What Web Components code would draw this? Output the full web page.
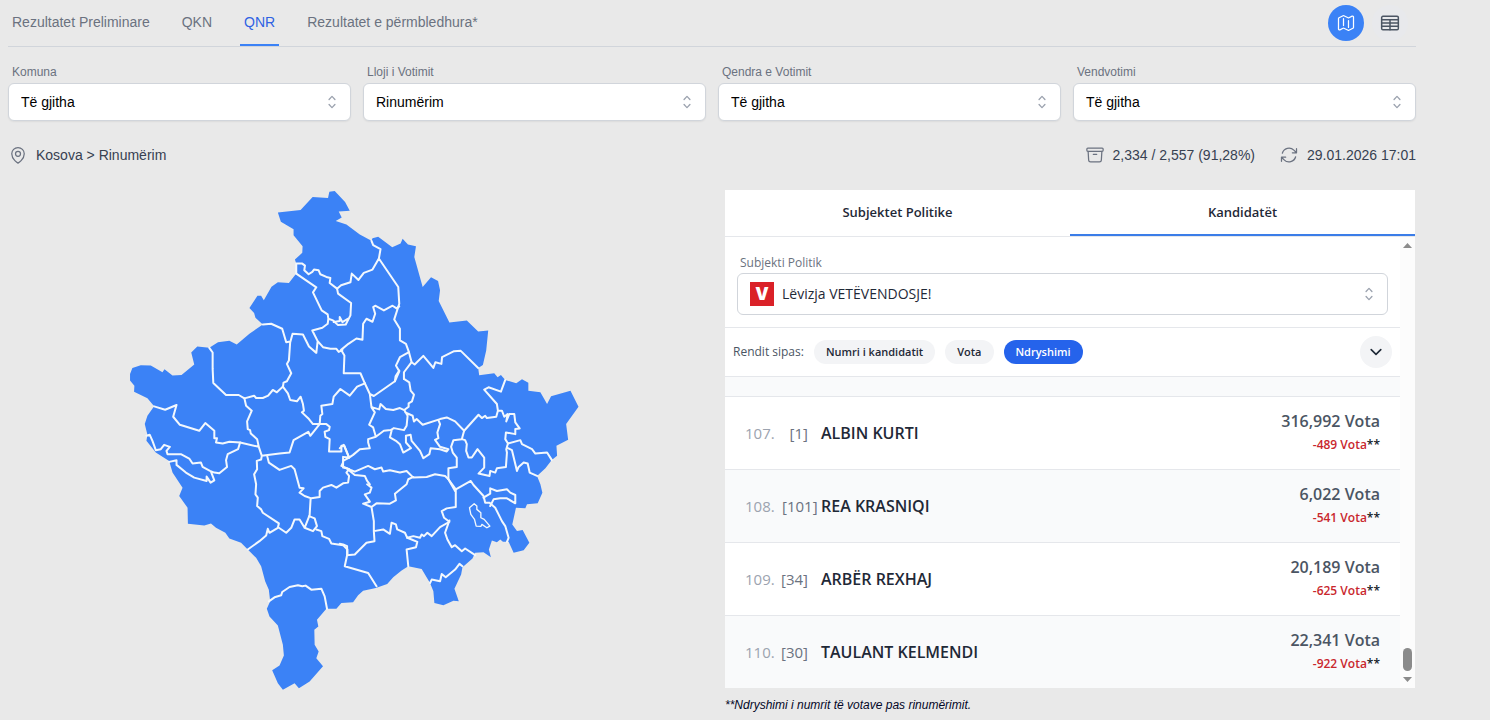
<!DOCTYPE html>
<html lang="sq">
<head>
<meta charset="utf-8">
<meta name="viewport" content="width=device-width, initial-scale=1">
<title>Rezultatet – QNR</title>
<style>
  body { margin: 0; background: #e9e9e9; font-family: "Liberation Sans", Arial, sans-serif; font-size: 14px; line-height: 20px; color: #374151; }
</style>
</head>
<body>
<results-page></results-page>

<template id="t-page">
  <style>
    :host { display: block; padding: 0 74px 0 8px; }
    .filters { display: grid; grid-template-columns: repeat(4, 1fr); gap: 12px; padding-top: 17px; }
    .info { display: flex; align-items: center; gap: 24px; padding: 24px 0 25px; }
    .info :first-child { margin-right: auto; }
    .content { display: grid; grid-template-columns: 1fr 1fr; gap: 24px; align-items: start; }
    aside { padding-left: 1px; padding-right: 1px; }
    .note { margin: 0; padding-top: 7px; font-size: 12px; font-style: italic; color: #030727; }
  </style>
  <results-nav></results-nav>
  <main>
    <div class="filters">
      <filter-select label="Komuna" value="Të gjitha"></filter-select>
      <filter-select label="Lloji i Votimit" value="Rinumërim"></filter-select>
      <filter-select label="Qendra e Votimit" value="Të gjitha"></filter-select>
      <filter-select label="Vendvotimi" value="Të gjitha"></filter-select>
    </div>
    <div class="info">
      <info-item icon="pin">Kosova &gt; Rinumërim</info-item>
      <info-item icon="archive">2,334 / 2,557 (91,28%)</info-item>
      <info-item icon="refresh">29.01.2026 17:01</info-item>
    </div>
    <div class="content">
      <kosovo-map></kosovo-map>
      <aside>
        <candidate-panel></candidate-panel>
        <p class="note">**Ndryshimi i numrit të votave pas rinumërimit.</p>
      </aside>
    </div>
  </main>
</template>

<template id="t-nav">
  <style>
    :host { display: flex; align-items: stretch; justify-content: space-between; height: 46px; border-bottom: 1px solid #d1d5db; }
    nav { display: flex; gap: 24px; }
    a { display: flex; align-items: center; padding: 0 4px; border-bottom: 2px solid transparent; color: #6b7280; text-decoration: none; }
    a[aria-current] { color: #2f62e3; border-color: #3b82f6; }
    .views { display: flex; align-items: center; gap: 8px; padding-right: 8px; }
    button { display: grid; place-items: center; width: 36px; height: 36px; padding: 0; border: 0; border-radius: 50%; background: #e8e9ec; color: #4b5563; }
    button[aria-pressed="true"] { background: #3b82f6; color: #fff; }
    svg { width: 20px; height: 20px; fill: none; stroke: currentColor; stroke-width: 1.5; stroke-linecap: round; stroke-linejoin: round; }
  </style>
  <nav>
    <a href="#preliminare">Rezultatet Preliminare</a>
    <a href="#qkn">QKN</a>
    <a href="#qnr" aria-current="page">QNR</a>
    <a href="#permbledhura">Rezultatet e përmbledhura*</a>
  </nav>
  <div class="views">
    <button type="button" aria-pressed="true" aria-label="Harta"><svg viewBox="0 0 24 24"><path d="M9 6.75V15m6-6v8.25m.503 3.498 4.875-2.437c.381-.19.622-.58.622-1.006V4.82c0-.836-.88-1.38-1.628-1.006l-3.869 1.934c-.317.159-.69.159-1.006 0L9.503 3.252a1.125 1.125 0 0 0-1.006 0L3.622 5.689C3.24 5.88 3 6.27 3 6.695V19.18c0 .836.88 1.38 1.628 1.006l3.869-1.934c.317-.159.69-.159 1.006 0l4.994 2.497c.317.158.69.158 1.006 0Z"/></svg></button>
    <button type="button" aria-pressed="false" aria-label="Tabela"><svg viewBox="0 0 24 24"><rect x="2" y="4" width="20" height="16" rx="1.5" stroke-width="1.8"/><path stroke-width="1.8" d="M2 8.2h20M2 12h20M2 16h20M12 8.2V20"/></svg></button>
  </div>
</template>

<template id="t-select">
  <style>
    :host { display: block; }
    label { display: block; padding: 0 4px; font-size: 12px; line-height: 16px; margin-bottom: 3px; color: #6b7280; }
    .box { display: grid; align-items: center; box-sizing: border-box; height: 38px; border: 1px solid #d1d5db; border-radius: 6px; background: #fff; box-shadow: 0 1px 2px rgba(0,0,0,.06); }
    select, svg { grid-area: 1 / 1; }
    select { appearance: none; width: 100%; height: 100%; padding: 0 40px 0 12px; border: 0; border-radius: 6px; background: transparent; font: inherit; color: #000; }
    svg { justify-self: end; margin-right: 9px; width: 18px; height: 18px; fill: #9ca3af; pointer-events: none; }
  </style>
  <label for="s"></label>
  <div class="box">
    <select id="s"><option></option></select>
    <svg viewBox="0 0 20 20"><path fill-rule="evenodd" d="M10 3a.75.75 0 01.55.24l3.25 3.5a.75.75 0 11-1.1 1.02L10 4.852 7.3 7.76a.75.75 0 01-1.1-1.02l3.25-3.5A.75.75 0 0110 3zm-3.76 9.2a.75.75 0 011.06.04l2.7 2.908 2.7-2.908a.75.75 0 111.1 1.02l-3.25 3.5a.75.75 0 01-1.1 0l-3.25-3.5a.75.75 0 01.04-1.06z"/></svg>
  </div>
</template>

<template id="t-info">
  <style>
    :host { display: flex; align-items: center; gap: 8px; }
    svg { width: 20px; height: 20px; fill: none; stroke: #6b7280; stroke-width: 1.5; stroke-linecap: round; stroke-linejoin: round; }
  </style>
  <svg viewBox="0 0 24 24"><path/></svg>
  <span><slot></slot></span>
</template>

<template id="t-map">
  <style>
    :host { display: flex; justify-content: center; }
    svg { width: 68%; aspect-ratio: 1407 / 1500; }
    .land { fill: #3b82f6; }
    .borders { fill: none; stroke: #f3f8fd; stroke-width: 6; stroke-linejoin: round; stroke-linecap: round; }
  </style>
  <svg viewBox="0 30 1407 1500" role="img" aria-label="Harta e Kosovës">
    <path class="land" d="M475,97 543,90 579,51 625,54 629,35 645,33 676,66 690,92 657,94 666,112 648,123 680,133 720,163 755,182 758,174 775,170 817,201 842,190 848,176 864,193 888,198 883,230 908,320 933,291 954,302 960,330 956,362 988,426 1040,420 1074,453 1104,450 1098,510 1088,553 1074,562 1077,584 1122,578 1132,590 1142,583 1155,598 1188,608 1205,596 1224,606 1224,630 1260,635 1280,670 1292,647 1350,630 1374,678 1337,730 1343,777 1308,795 1310,825 1294,837 1275,862 1250,885 1260,910 1266,935 1252,967 1220,970 1215,982 1187,980 1176,1030 1190,1050 1207,1047 1227,1085 1210,1107 1180,1115 1165,1082 1148,1082 1140,1075 1130,1083 1115,1078 1106,1105 1112,1128 1090,1113 1065,1115 1057,1132 1027,1158 1023,1180 1003,1222 1016,1260 1000,1258 970,1272 943,1265 940,1230 930,1205 905,1163 865,1155 845,1168 820,1188 802,1208 768,1220 730,1228 715,1242 700,1263 665,1265 650,1282 620,1282 592,1315 596,1335 584,1345 585,1390 597,1410 590,1430 610,1454 570,1500 538,1520 525,1505 490,1524 475,1505 458,1466 480,1452 493,1422 490,1390 475,1332 450,1305 442,1282 452,1260 448,1225 437,1200 425,1155 410,1130 385,1105 365,1085 330,1072 318,1055 290,1040 275,1027 255,1033 206,1028 205,980 180,945 190,920 160,875 150,840 110,815 82,780 85,762 77,730 85,705 105,677 85,653 45,633 46,615 33,600 33,580 40,562 65,554 95,555 130,575 136,566 160,585 187,583 225,552 216,516 234,498 270,502 296,485 330,481 352,492 390,460 430,432 408,412 404,398 390,383 414,346 425,346 433,360 456,319 475,306 508,308 530,280 530,250 526,238 548,218 549,198 522,165 522,147 484,125Z"/>
    <g class="borders">
      <path d="M530,280V250L548,250 556,256 554,270 567,282 578,275 583,268 597,270 602,282 620,290 632,293 630,308 652,325 664,315 692,306 696,280 716,299 732,278 758,268 777,235 782,207 760,195 755,182M777,235 835,320 838,370 823,417 840,445 840,480 858,490 867,515 875,545 884,552 910,526 940,562 946,545 964,550 966,530 1002,512 1022,511 1074,562"/>
      <path d="M530,280 590,321 580,336 606,390 624,402 626,415 624,430 608,442 578,450 594,482 590,517 568,498 550,462 519,460 512,485M594,482 610,500 632,505 650,505 657,514 668,508M626,415 640,420 655,434 678,432 692,405 694,368 655,340 652,325M642,425 660,422 660,410 668,425 684,415 M430,432 455,430 488,445 500,485 512,483 508,540 502,550 515,578 502,602 492,606 490,620M270,502 280,516 280,565 282,607 320,643 358,643 375,653 404,645 410,652 430,652 446,645 460,628 472,635 490,618"/>
      <g transform="translate(660)">
        <path d="M178,378 170,384 158,376 132,390 106,376 100,380 106,400 98,424 80,415 70,430 68,478 50,474 26,490 4,508 14,525 12,578 62,578 75,608M207,515 180,530 168,555 178,572 165,602M215,545 192,575 192,595"/>
      </g>
      <g transform="translate(0 540)">
        <path d="M375,113 380,135 397,150 383,182 385,205 392,208 394,218 413,235 418,258 362,245 330,243 310,248 290,245 293,232 285,232 285,210 258,187 240,210 182,192 162,168 172,133 138,147 105,137M418,258 427,285 425,296 412,300 413,325 404,340 410,370 408,400 415,410 413,435 425,445 430,455 478,487 475,500 450,515 445,503 440,523 420,540 385,565M427,285 480,278 510,275 522,238 566,213 572,225 600,190 580,190 568,175 547,155 553,150 550,130 543,108 532,122 512,118 505,98 490,78M600,190 602,165 608,160 605,135 638,130 642,108 662,85 690,105 712,78 735,68"/>
        <path d="M600,190 620,190 630,198 628,208 615,213 617,228 630,235 628,272 665,272 665,255 674,255 688,290 670,288 670,305 665,315 688,325 680,335 688,345 685,365 670,367 650,380 635,372 610,380 600,390 600,408 575,412 555,405 540,395 552,382 540,380 525,325 515,315 480,327 448,305 443,285M573,412 570,462 555,500 540,475 525,475 515,500 500,515 478,500M568,465 585,472 592,495 580,510 555,500M362,245 356,265 325,280 320,298 323,318 300,337 285,335 272,330 250,318 245,305 220,308 210,293 185,280 145,280 142,270 152,258 135,252 125,265 110,268 100,240 92,222 82,225M150,303 172,298 172,312 200,335 225,350 262,360 262,347 274,365 285,358 275,332"/>
      </g>
      <g transform="translate(660 540)">
        <path d="M75,68 90,100 102,106 165,62 167,47 178,30M192,55 208,65 212,90 222,102 216,122 206,128 206,138 193,148 180,142 160,148 138,145 122,130 118,146 98,140M90,100 95,140 105,155 88,192 100,200 108,228M193,148 203,165 200,195 192,208 162,202 152,208 132,210 108,228 85,235 85,245 90,262 60,265 40,282 28,290 12,252 0,262M196,155 218,165 222,182 230,175 248,192 300,175 320,170 345,182 372,210 365,235 340,238 333,258 338,275 350,290 350,318 325,322 325,355 345,390"/>
        <path d="M295,178 300,190 292,215 295,232 285,237 300,258 325,265 320,272 300,265 272,262 268,280 250,292 240,270 215,240 212,222 198,225 198,245 213,262 190,275 180,250 168,240 150,230 155,210M372,210 415,162 425,172 435,165 440,172 468,168 473,150 470,130 432,87 445,80 482,93 495,58M473,150 485,150 492,168 502,160 498,182 507,160 522,160 525,185 538,203 525,205 525,220 497,215 495,235 503,248 540,238 545,250 575,265 585,278 620,275 634,297"/>
        <path d="M503,248 498,265 500,275 497,318 470,322 465,335 450,330 448,345 415,338 432,320 432,290 412,265 395,290 385,290 378,270 380,250 375,238 365,235M503,262 515,268 530,330 535,318 550,305 562,308 568,335 590,345M28,290 10,300 10,320 20,322 45,332 85,315 105,325 125,320 130,332 150,328 180,335 200,330 220,350 260,348 285,340 315,345 325,355M20,322 45,342 75,345 82,360 90,370"/>
      </g>
      <g transform="translate(660 870)">
        <path d="M82,40 95,50 90,65 75,70 90,92 70,98 95,108 110,97 150,98 168,88 165,68 200,40 205,25 220,18M95,108 102,150 102,180 104,210 80,215 45,250 22,252 22,225 10,220 0,218M22,252 15,285 85,305 110,345M102,180 130,175 150,188 155,155 168,160 172,175 195,185 202,200 220,195 240,200 245,190 252,195 262,185 275,195 300,168 328,152 312,140 305,120 320,112 347,108 347,55 325,25M347,55 392,30 400,42 430,75 435,95 448,95 465,110 475,130 485,150 495,165 505,200 500,212"/>
        <path d="M430,80 450,68 450,52 470,60 500,55 510,65 525,72 525,97 500,82 480,82 460,85 450,105M202,200 215,205 232,212 228,228 200,235 205,285M328,148 315,185 322,205 335,228 345,222 365,240 375,232 405,252M270,335 275,325 300,330 305,308 317,318 345,295 358,278 367,285"/>
        <path stroke-width="4" d="M388,110 402,98 410,105 410,115 422,125 422,140 432,145 449,165 440,170 425,160 422,166 408,165 403,145 392,130Z"/>
      </g>
      <g transform="translate(330 960)">
        <path d="M118,300 135,288 155,282 158,272 180,257 205,252 218,255 228,253 245,265 275,262 285,285 292,322M260,85 275,90 278,105 298,113 305,127 340,132 353,145 353,160"/>
      </g>
    </g>
  </svg>
</template>

<template id="t-panel">
  <style>
    :host { display: block; background: #fff; font-family: "Open Sans", "Noto Sans", sans-serif; color: #1f2937; }
    button { font: inherit; border: 0; margin: 0; padding: 0; }
    .tabs { display: grid; grid-template-columns: 1fr 1fr; border-bottom: 1px solid #e5e7eb; }
    .tabs button { height: 46px; background: none; border-bottom: 2px solid transparent; font-size: 13px; font-weight: 600; color: #1f2937; }
    .tabs [aria-selected="true"] { border-color: #3b7de8; }
    .body { display: grid; grid-template-columns: minmax(0, 1fr) 15px; }
    .party { padding: 18px 12px 12px; }
    .party label { display: block; padding: 0 3px; font-size: 12px; line-height: 16px; margin-bottom: 2px; color: #6b7280; }
    .box { display: flex; align-items: center; gap: 8px; box-sizing: border-box; height: 42px; padding: 0 9px 0 12px; border: 1px solid #d1d5db; border-radius: 6px; }
    .logo { display: grid; place-items: center; width: 24px; height: 24px; background: #da2128; color: #fff; font: 900 17px/24px Inter, sans-serif; }
    select { flex: 1; appearance: none; height: 100%; border: 0; padding: 0; background: none; font: 500 14px/20px "Open Sans", sans-serif; color: #1f2937; }
    .box svg { width: 18px; height: 18px; fill: #9ca3af; }
    .sort { display: flex; align-items: center; gap: 10px; height: 48px; padding: 0 8px; border-top: 1px solid #e5e7eb; border-bottom: 1px solid #e5e7eb; font-size: 12px; color: #4b5563; }
    .chip { height: 24px; padding: 0 12px; border-radius: 12px; background: #f3f4f6; color: #1f2937; font-size: 11px; font-weight: 600; }
    .chip[aria-pressed="true"] { background: #2563eb; color: #fff; }
    .more { display: grid; place-items: center; width: 32px; height: 32px; margin-left: auto; border-radius: 50%; background: #f3f4f6; }
    .more svg { width: 16px; height: 16px; fill: none; stroke: #1f2937; stroke-width: 2; stroke-linecap: round; stroke-linejoin: round; }
    .previous { height: 19px; background: #f9fafb; }
    .bar { display: flex; flex-direction: column; align-items: center; justify-content: space-between; padding: 6px 0; background: #fcfcfc; }
    .bar svg { width: 9px; height: 5px; fill: #8b8b8b; }
    .end { display: flex; flex-direction: column; align-items: center; gap: 6px; }
    .thumb { width: 9px; height: 23px; border-radius: 5px; background: #8b8b8b; }
  </style>
  <div class="tabs" role="tablist">
    <button type="button" role="tab" aria-selected="false">Subjektet Politike</button>
    <button type="button" role="tab" aria-selected="true">Kandidatët</button>
  </div>
  <div class="body">
    <div>
      <div class="party">
        <label for="p">Subjekti Politik</label>
        <div class="box">
          <span class="logo" aria-hidden="true">V</span>
          <select id="p"><option>Lëvizja VETËVENDOSJE!</option></select>
          <svg viewBox="0 0 20 20"><path fill-rule="evenodd" d="M10 3a.75.75 0 01.55.24l3.25 3.5a.75.75 0 11-1.1 1.02L10 4.852 7.3 7.76a.75.75 0 01-1.1-1.02l3.25-3.5A.75.75 0 0110 3zm-3.76 9.2a.75.75 0 011.06.04l2.7 2.908 2.7-2.908a.75.75 0 111.1 1.02l-3.25 3.5a.75.75 0 01-1.1 0l-3.25-3.5a.75.75 0 01.04-1.06z"/></svg>
        </div>
      </div>
      <div class="sort">
        <span>Rendit sipas:</span>
        <button class="chip" type="button" aria-pressed="false">Numri i kandidatit</button>
        <button class="chip" type="button" aria-pressed="false">Vota</button>
        <button class="chip" type="button" aria-pressed="true">Ndryshimi</button>
        <button class="more" type="button" aria-label="Më shumë"><svg viewBox="0 0 20 20"><path d="M4 7l6 6 6-6"/></svg></button>
      </div>
      <div class="previous"></div>
      <div role="list">
        <candidate-row rank="107" number="1" votes="316,992" change="-489">ALBIN KURTI</candidate-row>
        <candidate-row rank="108" number="101" votes="6,022" change="-541">REA KRASNIQI</candidate-row>
        <candidate-row rank="109" number="34" votes="20,189" change="-625">ARBËR REXHAJ</candidate-row>
        <candidate-row rank="110" number="30" votes="22,341" change="-922">TAULANT KELMENDI</candidate-row>
      </div>
    </div>
    <div class="bar" aria-hidden="true">
      <svg viewBox="0 0 9 5"><path d="M0 5 4.500 0 9 5Z"/></svg>
      <div class="end">
        <div class="thumb"></div>
        <svg viewBox="0 0 9 5"><path d="M0 0 4.500 5 9 0Z"/></svg>
      </div>
    </div>
  </div>
</template>

<template id="t-row">
  <style>
    :host { display: grid; grid-template-columns: 29px 26px minmax(0, 1fr) auto; column-gap: 8px; align-items: center; box-sizing: border-box; height: 73px; padding: 0 20px; border-top: 1px solid #e5e7eb; background: #fff; font-size: 15px; line-height: 24px; }
    :host(:nth-child(even)) { background: #f9fafb; }
    .rank { color: #9ca3af; }
    .num { display: flex; justify-content: flex-end; color: #6b7280; white-space: nowrap; }
    .num.wide { justify-content: flex-start; }
    .name { padding-left: 5px; font-size: 16px; font-weight: 600; color: #1f2937; }
    .votes { text-align: right; font-size: 16px; font-weight: 600; color: #4b5563; }
    .change { text-align: right; font-size: 12px; font-weight: 600; color: #c9272d; }
    .change b { font-weight: 600; }
    .change span { color: #111827; }
  </style>
  <span class="rank"></span>
  <span class="num"></span>
  <span class="name"><slot></slot></span>
  <div>
    <div class="votes"></div>
    <div class="change"><b></b><span>**</span></div>
  </div>
</template>

<script>
  class TemplateElement extends HTMLElement {
    constructor() {
      super();
      const root = this.attachShadow({ mode: 'open' });
      root.append(document.getElementById(this.constructor.template).content.cloneNode(true));
    }
    find(selector) { return this.shadowRoot.querySelector(selector); }
  }

  class ResultsNav extends TemplateElement { static template = 't-nav'; }
  class KosovoMap extends TemplateElement { static template = 't-map'; }
  class CandidatePanel extends TemplateElement { static template = 't-panel'; }
  class ResultsPage extends TemplateElement { static template = 't-page'; }

  class FilterSelect extends TemplateElement {
    static template = 't-select';
    connectedCallback() {
      this.find('label').textContent = this.getAttribute('label');
      this.find('option').textContent = this.getAttribute('value');
    }
  }

  const ICONS = {
    pin: 'M15 10.5a3 3 0 1 1-6 0 3 3 0 0 1 6 0ZM19.500 10.500c0 7.142-7.500 11.250-7.500 11.250S4.500 17.642 4.500 10.500a7.500 7.500 0 1 1 15 0Z',
    archive: 'm20.250 7.500-.625 10.632a2.250 2.250 0 0 1-2.247 2.118H6.622a2.250 2.250 0 0 1-2.247-2.118L3.750 7.500M10 11.250h4M3.375 7.500h17.250c.621 0 1.125-.504 1.125-1.125v-1.500c0-.621-.504-1.125-1.125-1.125H3.375c-.621 0-1.125.504-1.125 1.125v1.500c0 .621.504 1.125 1.125 1.125Z',
    refresh: 'M16.023 9.348h4.992v-.001M2.985 19.644v-4.992m0 0h4.992m-4.993 0 3.181 3.183a8.250 8.250 0 0 0 13.803-3.700M4.031 9.865a8.250 8.250 0 0 1 13.803-3.700l3.181 3.182m0-4.991v4.990'
  };

  class InfoItem extends TemplateElement {
    static template = 't-info';
    connectedCallback() { this.find('path').setAttribute('d', ICONS[this.getAttribute('icon')]); }
  }

  class CandidateRow extends TemplateElement {
    static template = 't-row';
    connectedCallback() {
      this.setAttribute('role', 'listitem');
      const number = this.getAttribute('number');
      this.find('.rank').textContent = this.getAttribute('rank') + '.';
      this.find('.num').textContent = '[' + number + ']';
      this.find('.num').classList.toggle('wide', number.length > 2);
      this.find('.votes').textContent = this.getAttribute('votes') + ' Vota';
      this.find('b').textContent = this.getAttribute('change') + ' Vota';
    }
  }

  customElements.define('results-nav', ResultsNav);
  customElements.define('kosovo-map', KosovoMap);
  customElements.define('filter-select', FilterSelect);
  customElements.define('info-item', InfoItem);
  customElements.define('candidate-row', CandidateRow);
  customElements.define('candidate-panel', CandidatePanel);
  customElements.define('results-page', ResultsPage);
</script>
</body>
</html>
